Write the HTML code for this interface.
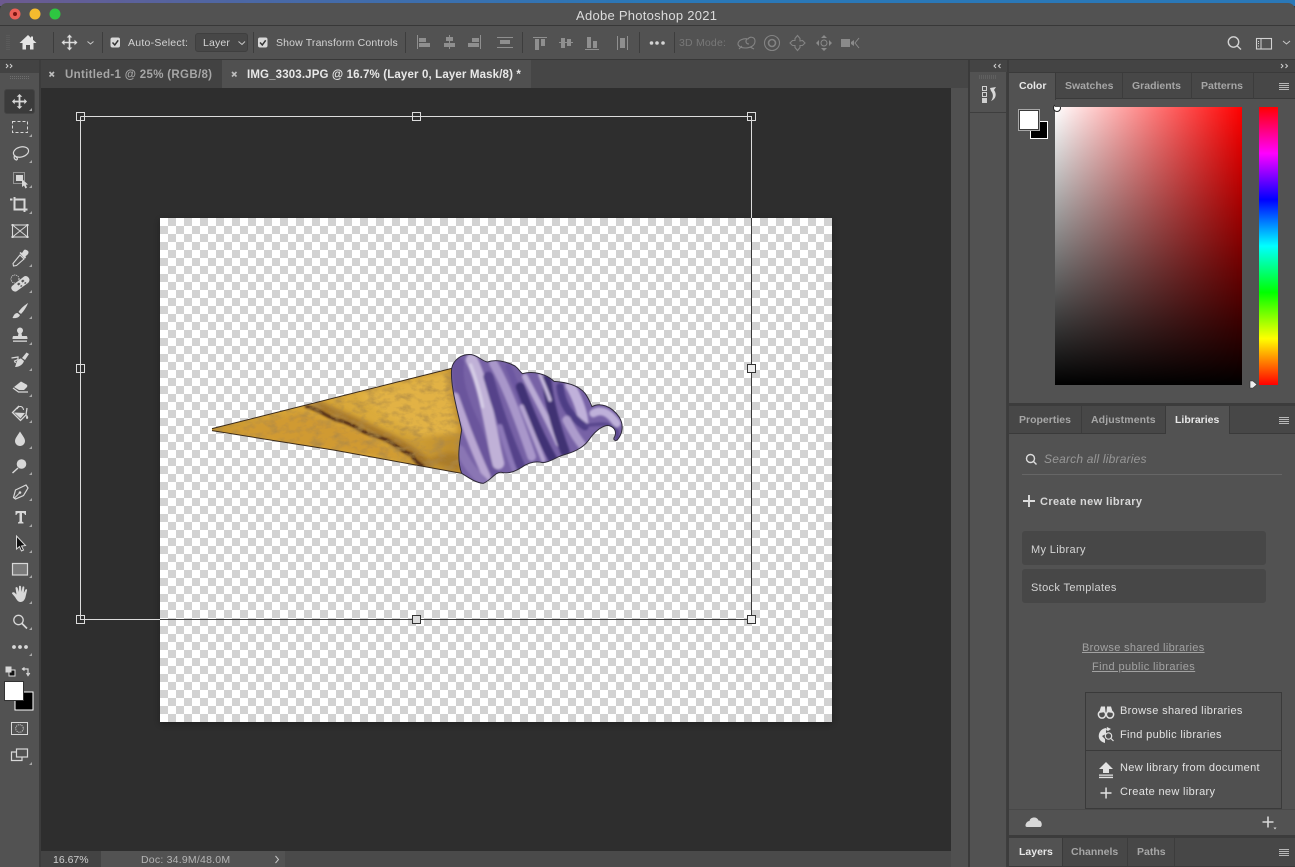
<!DOCTYPE html>
<html><head><meta charset="utf-8"><title>Adobe Photoshop 2021</title>
<style>
*{box-sizing:border-box}
html,body{margin:0;padding:0;width:1295px;height:867px;overflow:hidden;background:#3a3a3a}
body{position:relative;font-family:"Liberation Sans",sans-serif;filter:blur(.3px)}
.b{position:absolute}
.t{position:absolute;white-space:nowrap;line-height:16px;height:16px;font-size:11px;color:#d4d4d4;margin-top:1px}
.bd{font-weight:bold}
.tab{color:#a6a6a6;font-weight:bold;font-size:11.500px}
.on{color:#e8e8e8}
.m{color:#e2e2e2;font-size:11px;letter-spacing:.34px}
#ck{left:160px;top:218px;width:672px;height:504px;background-color:#fff;background-image:conic-gradient(#d2d2d2 0 25%,#fff 0 50%,#d2d2d2 0 75%,#fff 0);background-size:16px 16px;box-shadow:0 2px 6px rgba(0,0,0,.3)}
svg.o{position:absolute;left:0;top:0}
</style></head><body>
<div class="b" style="left:0;top:0;width:1295px;height:6px;background:linear-gradient(90deg,#6d5a90,#4a68a6 20%,#2a78b8 50%,#2a78b8 100%)"></div>
<div class="b" style="left:0;top:3px;width:1295px;height:864px;background:#525252;border-radius:7px 7px 0 0"></div>
<div class="b" style="left:0;top:25px;width:1295px;height:1px;background:#383838"></div>
<div class="b" style="left:0;top:59px;width:1295px;height:1px;background:#383838"></div>
<div class="b" style="left:0;top:60px;width:39px;height:13px;background:#434343"></div>
<div class="b" style="left:39px;top:60px;width:2px;height:807px;background:#3c3c3c"></div>
<div class="b" style="left:41px;top:60px;width:927px;height:28px;background:#464646"></div>
<div class="b" style="left:41px;top:60px;width:181px;height:28px;background:#424242"></div>
<div class="b" style="left:222px;top:60px;width:309px;height:28px;background:#505050"></div>
<div class="b" style="left:41px;top:88px;width:910px;height:763px;background:#2e2e2e"></div>
<div class="b" style="left:951px;top:88px;width:17px;height:779px;background:#505050"></div>
<div class="b" style="left:41px;top:851px;width:910px;height:16px;background:#4a4a4a"></div>
<div class="b" style="left:41px;top:851px;width:60px;height:16px;background:#434343"></div>
<div class="b" style="left:101px;top:851px;width:184px;height:16px;background:#525252"></div>
<div class="b" style="left:968px;top:60px;width:2px;height:807px;background:#3a3a3a"></div>
<div class="b" style="left:970px;top:60px;width:325px;height:12px;background:#444"></div>
<div class="b" style="left:970px;top:72px;width:37px;height:795px;background:#525252;border-right:1px solid #3e3e3e"></div>
<div class="b" style="left:970px;top:112px;width:37px;height:1px;background:#3e3e3e"></div>
<div class="b" style="left:1007px;top:60px;width:2px;height:807px;background:#3c3c3c"></div>
<!-- panel tab bars -->
<div class="b" style="left:1009px;top:72px;width:286px;height:1px;background:#3a3a3a"></div>
<div class="b" style="left:1009px;top:73px;width:286px;height:26px;background:#474747;border-bottom:1px solid #3a3a3a"></div>
<div class="b" style="left:1009px;top:73px;width:47px;height:27px;background:#525252;border-right:1px solid #3a3a3a"></div>
<div class="b" style="left:1122px;top:73px;width:1px;height:26px;background:#3c3c3c"></div>
<div class="b" style="left:1191px;top:73px;width:1px;height:26px;background:#3c3c3c"></div>
<div class="b" style="left:1253px;top:73px;width:1px;height:26px;background:#3c3c3c"></div>
<div class="b" style="left:1009px;top:403px;width:286px;height:3px;background:#3c3c3c"></div>
<div class="b" style="left:1009px;top:406px;width:286px;height:28px;background:#474747;border-bottom:1px solid #3a3a3a"></div>
<div class="b" style="left:1081px;top:406px;width:1px;height:27px;background:#3c3c3c"></div>
<div class="b" style="left:1165px;top:406px;width:65px;height:28px;background:#525252;border-left:1px solid #3a3a3a;border-right:1px solid #3a3a3a"></div>
<div class="b" style="left:1009px;top:809px;width:286px;height:1px;background:#484848"></div>
<div class="b" style="left:1009px;top:835px;width:286px;height:3px;background:#3c3c3c"></div>
<div class="b" style="left:1009px;top:838px;width:286px;height:29px;background:#474747"></div>
<div class="b" style="left:1009px;top:838px;width:54px;height:29px;background:#525252;border-right:1px solid #3a3a3a"></div>
<div class="b" style="left:1127px;top:838px;width:1px;height:29px;background:#3c3c3c"></div>
<div class="b" style="left:1174px;top:838px;width:1px;height:29px;background:#3c3c3c"></div>
<div class="b" style="left:1009px;top:866px;width:286px;height:1px;background:#3a3a3a"></div>
<!-- colour -->
<div class="b" style="left:1055px;top:107px;width:187px;height:278px;background:linear-gradient(to top,#000,rgba(0,0,0,0)),linear-gradient(to right,#fff,#f00)"></div>
<div class="b" style="left:1259px;top:107px;width:19px;height:278px;background:linear-gradient(to bottom,#f00 0%,#f0f 16.7%,#00f 33.3%,#0ff 50%,#0f0 66.7%,#ff0 83.3%,#f00 100%)"></div>
<div class="b" style="left:1030px;top:121px;width:18px;height:18px;background:#000;border:1px solid #fff"></div>
<div class="b" style="left:1018px;top:109px;width:22px;height:22px;background:#fff;border:2px solid #3a3a3a;outline:1px solid #a8a8a8;outline-offset:-1px"></div>
<!-- libraries boxes -->
<div class="b" style="left:1022px;top:474px;width:260px;height:1px;background:#666"></div>
<div class="b" style="left:1022px;top:531px;width:244px;height:34px;background:#474747;border-radius:3px"></div>
<div class="b" style="left:1022px;top:569px;width:244px;height:34px;background:#474747;border-radius:3px"></div>
<div class="b" style="left:1085px;top:692px;width:197px;height:117px;background:#505050;border:1px solid #3a3a3a"></div>
<div class="b" style="left:1086px;top:750px;width:195px;height:1px;background:#3a3a3a"></div>
<!-- options dropdown -->
<div class="b" style="left:195px;top:33px;width:53px;height:19px;background:#474747;border:1px solid #3f3f3f;border-radius:3px"></div>
<div class="b" style="left:4px;top:89px;width:31px;height:25px;background:#3b3b3b;border-radius:3px;border:1px solid #444"></div>
<div class="b" id="ck"></div>

<!-- text -->
<div class="t" style="left:576px;top:7px;font-size:13px;letter-spacing:.27px;color:#dcdcdc">Adobe Photoshop 2021</div>
<div class="t" style="left:128px;top:34px;font-size:10.5px;letter-spacing:.25px">Auto-Select:</div>
<div class="t" style="left:203px;top:34px;font-size:10.5px;letter-spacing:.15px">Layer</div>
<div class="t" style="left:276px;top:34px;font-size:10.5px;letter-spacing:.15px">Show Transform Controls</div>
<div class="t" style="left:679px;top:34px;font-size:10.5px;color:#787878;letter-spacing:.2px">3D Mode:</div>
<div class="t tab" style="left:65px;top:66px;letter-spacing:.32px">Untitled-1 @ 25% (RGB/8)</div>
<div class="t tab on" style="left:247px;top:66px;letter-spacing:.14px">IMG_3303.JPG @ 16.7% (Layer 0, Layer Mask/8) *</div>
<div class="t tab on" style="left:1019px;top:77px;font-size:10.5px">Color</div>
<div class="t tab" style="left:1065px;top:77px;font-size:10.5px">Swatches</div>
<div class="t tab" style="left:1132px;top:77px;font-size:10.5px">Gradients</div>
<div class="t tab" style="left:1201px;top:77px;font-size:10.5px">Patterns</div>
<div class="t tab" style="left:1019px;top:411px;font-size:10.5px">Properties</div>
<div class="t tab" style="left:1091px;top:411px;font-size:10.5px;letter-spacing:.1px">Adjustments</div>
<div class="t tab on" style="left:1175px;top:411px;font-size:10.5px">Libraries</div>
<div class="t" style="left:1044px;top:450px;font-size:12px;font-style:italic;color:#979797;letter-spacing:.2px">Search all libraries</div>
<div class="t bd" style="left:1040px;top:493px;font-size:11px;color:#d8d8d8;letter-spacing:.39px">Create new library</div>
<div class="t" style="left:1031px;top:541px;letter-spacing:.35px">My Library</div>
<div class="t" style="left:1031px;top:579px;letter-spacing:.35px">Stock Templates</div>
<div class="t" style="left:1082px;top:639px;color:#a2a2a2;text-decoration:underline;letter-spacing:.33px">Browse shared libraries</div>
<div class="t" style="left:1092px;top:658px;color:#a2a2a2;text-decoration:underline;letter-spacing:.4px">Find public libraries</div>
<div class="t m" style="left:1120px;top:702px">Browse shared libraries</div>
<div class="t m" style="left:1120px;top:726px">Find public libraries</div>
<div class="t m" style="left:1120px;top:759px">New library from document</div>
<div class="t m" style="left:1120px;top:783px">Create new library</div>
<div class="t tab on" style="left:1019px;top:843px;font-size:10.5px">Layers</div>
<div class="t tab" style="left:1071px;top:843px;font-size:10.5px">Channels</div>
<div class="t tab" style="left:1137px;top:843px;font-size:10.5px">Paths</div>
<div class="t" style="left:53px;top:851px;font-size:10.5px;color:#d0d0d0">16.67%</div>
<div class="t" style="left:141px;top:851px;font-size:10.5px;color:#b4b4b4;letter-spacing:.22px">Doc: 34.9M/48.0M</div>

<svg class="o" width="1295" height="867" viewBox="0 0 1295 867" xmlns="http://www.w3.org/2000/svg">
<defs>
<linearGradient id="cone" x1="0" y1="0" x2="1" y2="0.1"><stop offset="0" stop-color="#b88c2c"/><stop offset=".3" stop-color="#d6a436"/><stop offset=".75" stop-color="#dcac3c"/><stop offset="1" stop-color="#c08f2e"/></linearGradient>
<clipPath id="sw"><path id="swp" d="M755 85C760 60 785 40 815 44C835 48 845 62 862 66C885 58 915 62 945 78C958 88 962 98 968 101C1000 92 1040 102 1062 124C1095 126 1135 135 1155 160C1168 178 1172 192 1176 200C1200 186 1235 198 1258 232C1272 255 1268 280 1252 300C1244 304 1238 298 1244 290C1252 272 1240 258 1222 256C1200 260 1180 280 1165 302C1145 328 1115 338 1090 345C1070 350 1050 368 1028 368C1005 362 985 368 965 382C945 395 925 402 905 397C885 395 875 420 850 430C825 428 805 412 785 400C770 360 778 310 785 270C775 220 750 140 755 85Z"/></clipPath>
<clipPath id="cc"><path d="M36 266L755 85C750 140 775 220 785 270C778 310 775 360 785 400L400 330L36 272Z"/></clipPath>
<filter id="sft" x="-10%" y="-10%" width="120%" height="120%"><feGaussianBlur stdDeviation="2.800"/></filter>
<filter id="sft2" x="-20%" y="-20%" width="140%" height="140%"><feGaussianBlur stdDeviation="9"/></filter>
<filter id="tex" x="0" y="0" width="100%" height="100%"><feTurbulence type="fractalNoise" baseFrequency=".03 .05" numOctaves="4" seed="4" result="n"/><feColorMatrix in="n" type="matrix" values="0 0 0 0 .42  0 0 0 0 .25  0 0 0 0 .06  0 0 0 1.8 -.75" result="d"/><feMerge><feMergeNode in="SourceGraphic"/><feMergeNode in="d"/></feMerge></filter>
</defs>

<!-- ice cream -->
<g transform="translate(200 340) scale(.33333)">
<g clip-path="url(#cc)">
<g filter="url(#tex)">
<rect x="0" y="60" width="800" height="360" fill="url(#cone)"/>
<path d="M60 272L300 215L480 275L640 365L300 320Z" fill="#d09a32" filter="url(#sft2)"/>
<path d="M470 165L740 95L775 280L650 290Z" fill="#e2b244" filter="url(#sft2)"/>
<path d="M680 360L780 395L785 340L740 340Z" fill="#a97a2a" filter="url(#sft2)"/>
<path d="M340 190C420 225 500 260 570 295C620 320 650 345 690 385" fill="none" stroke="#7e4f1c" stroke-width="26" opacity=".6" filter="url(#sft2)"/>
<path d="M315 198C350 205 375 225 405 238C440 245 465 258 485 272C510 285 535 288 560 300C585 312 605 335 638 345C640 360 655 370 672 380" fill="none" stroke="#4f2c14" stroke-width="10" stroke-linejoin="round" filter="url(#sft)"/>
</g>
</g>
<path d="M36 266L755 85M36 272L400 330L785 400" fill="none" stroke="#3a2a1a" stroke-width="3" stroke-linejoin="round"/>
<g clip-path="url(#sw)">
<rect x="740" y="30" width="540" height="410" fill="#7762a6"/>
<g fill="none" stroke-linecap="round" filter="url(#sft)">
<path d="M775 70C768 120 790 190 825 260C845 310 860 360 880 400" stroke="#6a559c" stroke-width="34"/>
<path d="M815 60C845 120 860 200 880 300C885 330 890 350 895 370" stroke="#c0b1d7" stroke-width="36"/>
<path d="M812 75C825 110 838 150 848 200" stroke="#d6cde6" stroke-width="10"/>
<path d="M765 170C790 240 815 310 860 410" stroke="#b8a6d2" stroke-width="24"/>
<path d="M780 330C800 370 820 400 850 425" stroke="#8a76b4" stroke-width="28"/>
<path d="M865 110C890 200 925 300 965 390" stroke="#54428a" stroke-width="30"/>
<path d="M880 70C915 130 950 220 995 350" stroke="#a997ca" stroke-width="26"/>
<path d="M925 80C945 130 965 170 985 240" stroke="#6c57a0" stroke-width="18"/>
<path d="M900 260C915 310 930 360 945 395" stroke="#8c78b8" stroke-width="16"/>
<path d="M960 140C990 220 1020 290 1060 360" stroke="#403075" stroke-width="26"/>
<path d="M975 110C1005 170 1040 230 1075 310" stroke="#b9aad4" stroke-width="18"/>
<path d="M965 200C990 260 1010 310 1030 360" stroke="#b2a2cf" stroke-width="14"/>
<path d="M1040 120C1045 170 1060 240 1095 335" stroke="#3f3073" stroke-width="28"/>
<path d="M1020 105C1030 130 1040 150 1050 180" stroke="#c6b9dd" stroke-width="10"/>
<path d="M1110 135C1130 170 1150 220 1150 250" stroke="#c0b1da" stroke-width="30"/>
<path d="M1080 140C1085 190 1110 230 1155 260" stroke="#4e3d85" stroke-width="22"/>
<path d="M1100 240C1120 280 1135 300 1150 320" stroke="#ad9ccc" stroke-width="26"/>
<path d="M1180 220C1205 205 1230 220 1250 250" stroke="#bfb1da" stroke-width="24"/>
<path d="M1160 255C1190 255 1215 245 1240 262C1250 268 1255 280 1250 295" stroke="#57458c" stroke-width="10"/>
</g>
</g>
<use href="#swp" fill="none" stroke="#2f2a3a" stroke-width="3"/>
</g>

<!-- transform box -->
<g fill="none" shape-rendering="crispEdges">
<path d="M80.5 116.5H751.5V218M80.5 116.500V619.500H160" stroke="#dcdcdc"/>
<path d="M751.500 218V619.500H160" stroke="#3a3a3a"/>
<rect x="76.500" y="112.500" width="8" height="8" stroke="#dcdcdc"/>
<rect x="412.500" y="112.500" width="8" height="8" stroke="#dcdcdc"/>
<rect x="747.500" y="112.500" width="8" height="8" stroke="#dcdcdc"/>
<rect x="76.500" y="364.500" width="8" height="8" stroke="#dcdcdc"/>
<rect x="76.500" y="615.500" width="8" height="8" stroke="#dcdcdc"/>
<rect x="412.500" y="615.500" width="8" height="8" stroke="#333" fill="#ddd"/>
<rect x="747.500" y="364.500" width="8" height="8" stroke="#333" fill="#eee"/>
<rect x="747.500" y="615.500" width="8" height="8" stroke="#333" fill="#eee"/>
</g>

<!-- traffic lights -->
<circle cx="15" cy="14" r="5.500" fill="#ec5f57"/><circle cx="15" cy="14" r="2" fill="#7b1512"/>
<circle cx="35" cy="14" r="5.500" fill="#f5bb2e"/><circle cx="55" cy="14" r="5.500" fill="#2ec541"/>

<!-- options separators -->
<path d="M53.500 32V53M102.500 32V53M253.500 32V53M405.500 32V53M522.500 32V53M639.500 32V53M674.500 32V53" stroke="#3d3d3d"/>
<path d="M7 35V50M9 35V50" stroke="#626262" stroke-dasharray="1 1"/>
<!-- home -->
<path d="M28 35L19.500 43H22.500V49.500H26V45H30V49.500H33.500V43H36.500L33 39.800V36.500H31V37.900Z" fill="#e6e6e6"/>
<!-- move option -->
<path transform="translate(69.500 42.500)" d="M0-8L-2.800-5H-.8V-.8H-5V-2.800L-8 0L-5 2.800V.8H-.8V5H-2.800L0 8L2.800 5H.8V.8H5V2.800L8 0L5-2.800V-.8H.8V-5H2.800Z" fill="#dcdcdc"/>
<g fill="none" stroke="#c8c8c8" stroke-width="1"><path d="M87.500 41.500L90.500 44L93.500 41.500M238.500 41.500L242 44.500L245 41.500M1283 41L1286.500 44L1290 41"/></g>
<!-- checkboxes -->
<rect x="110.500" y="37.500" width="9.500" height="10" rx="2" fill="#d8d8d8"/><path d="M112.500 42.500L114.800 45L118.200 40.300" stroke="#333" stroke-width="1.500" fill="none"/>
<rect x="258" y="37.500" width="9.500" height="10" rx="2" fill="#d8d8d8"/><path d="M260 42.500L262.300 45L265.700 40.300" stroke="#333" stroke-width="1.500" fill="none"/>
<!-- align icons -->
<g fill="#8f8f8f">
<path d="M417 35h1v14h-1zM419 38h7v4h-7zM419 43h11v4h-11z"/>
<path d="M449 35h1v14h-1zM446 37h7v4h-7zM444 43h11v4h-11z"/>
<path d="M480 35h1v14h-1zM472 38h7v4h-7zM468 43h11v4h-11z"/>
<path d="M497 37h16v1h-16zM497 47h16v1h-16zM500 40h10v4h-10z"/>
<path d="M533 37h14v1h-14zM535 39h4v11h-4zM541 39h4v7h-4z"/>
<path d="M559 42h14v1h-14zM561 38h4v10h-4zM567 39h4v7h-4z"/>
<path d="M585 49h14v1h-14zM587 37h4v11h-4zM593 41h4v7h-4z"/>
<path d="M617 36h1v14h-1zM627 36h1v14h-1zM620 38h5v10h-5z"/>
</g>
<g fill="#d4d4d4"><circle cx="651.500" cy="43" r="1.800"/><circle cx="657" cy="43" r="1.800"/><circle cx="663" cy="43" r="1.800"/></g>
<!-- 3D icons -->
<g fill="none" stroke="#838383" stroke-width="1.100">
<path d="M738 44C738 40 744 38 748 39C750 36 755 37 755 41C755 46 750 48 745 48C741 48 738 46 738 44ZM742 46L739 49M750 47L754 49M747 39C745 41 746 44 749 44"/>
<circle cx="772" cy="43" r="7.500"/><circle cx="772" cy="43" r="3.500" stroke-width="1.600"/>
<path d="M797.500 35.500L800 38.500V41L802.500 40.500L805 43L802.500 45.500H800V47.500L797.500 50.500L795 47.500V45.500H792.500L790 43L792.500 40.500H795V38.500Z"/>
</g>
<g fill="#8a8a8a">
<path d="M824 35l3 3h-6zM824 51l3-3h-6zM816 43l3-3v6zM832 43l-3-3v6z"/><circle cx="824" cy="43" r="3" fill="none" stroke="#8a8a8a"/>
<path d="M841 39h9v8h-9zM851 42l3-2v6l-3-2z"/><path d="M859 38l-4 5 4 5" fill="none" stroke="#8a8a8a"/>
</g>
<!-- right header icons -->
<g fill="none" stroke="#d2d2d2" stroke-width="1.400"><circle cx="1233.500" cy="42" r="5.200"/><path d="M1237.300 46L1241 49.500"/></g>
<rect x="1256.500" y="38.500" width="15" height="10.500" fill="none" stroke="#d2d2d2" stroke-width="1.100"/><path d="M1258.500 41v1M1258.500 43v1M1258.500 45.500v1M1261 38.500v10.500" stroke="#d2d2d2"/>
<!-- collapse glyphs -->
<g fill="none" stroke="#d0d0d0" stroke-width="1">
<path d="M6 64L8 66L6 68M10 64L12 66L10 68"/>
<path d="M996 64L994 66L996 68M1000.500 64L998.500 66L1000.500 68"/>
<path d="M1281 64L1283 66L1281 68M1285.500 64L1287.500 66L1285.500 68"/>
</g>
<!-- tab close -->
<g stroke="#bdbdbd" stroke-width="1.600"><path d="M49.500 72L54 76.500M54 72L49.500 76.500"/><path d="M232 72L236.500 76.500M236.500 72L232 76.500"/></g>
<!-- grips -->
<path d="M10 76.500H30M10 78.500H30" stroke="#6e6e6e" stroke-dasharray="1 1"/>
<path d="M979 76H997M979 78H997" stroke="#6e6e6e" stroke-dasharray="1 1"/>
<!-- history dock icon -->
<g fill="none" stroke="#d0d0d0"><rect x="982.500" y="86.500" width="4" height="4"/><rect x="982.500" y="92.500" width="4" height="4"/></g><rect x="982" y="98" width="5" height="5" fill="#d0d0d0"/>
<path d="M990 88L996 87L994 90C997 94 996 99 991 101C994 97 993 93 991 91Z" fill="#d8d8d8"/>
<!-- panel menus -->
<g stroke="#b8b8b8" stroke-width="1"><path d="M1279 83.500H1289M1279 85.500H1289M1279 87.500H1289M1279 89.500H1289"/><path d="M1279 417.500H1289M1279 419.500H1289M1279 421.500H1289M1279 423.500H1289"/><path d="M1279 849.500H1289M1279 851.500H1289M1279 853.500H1289M1279 855.500H1289"/></g>
<!-- colour pickers -->
<circle cx="1057" cy="108" r="3.500" fill="#fff" stroke="#222" stroke-width="1"/>
<rect x="1055" y="100" width="10" height="7" fill="#525252"/>
<path d="M1250 381h3l4 3.500-4 3.500h-3z" fill="#eee" stroke="#333" stroke-width=".6"/>
<!-- libraries icons -->
<g fill="none" stroke="#dcdcdc" stroke-width="1.400"><circle cx="1030.500" cy="458.500" r="4"/><path d="M1033.500 461.500L1036.500 464.500"/></g>
<path d="M1029 495V507M1023 501H1035" stroke="#dcdcdc" stroke-width="1.900"/>
<!-- popup icons -->
<g fill="#e2e2e2">
<circle cx="1102" cy="714.500" r="3.600" fill="none" stroke="#e2e2e2" stroke-width="1.500"/><circle cx="1110" cy="714.500" r="3.600" fill="none" stroke="#e2e2e2" stroke-width="1.500"/>
<path d="M1099 713L1101 706.500H1105L1105.500 712zM1106.500 712L1107 706.500H1111L1113 713z"/>
<path d="M1106 728C1100 729 1098 734 1099 738C1100 741 1102 742 1105 743L1105 739L1102 736L1106 734ZM1107 727L1111 729L1108 731L1106 730Z"/>
<path d="M1106 762L1113 769H1109V773H1103V769H1099Z"/><path d="M1099 774.500h14v1.300h-14zM1099 776.800h14v1.300h-14z"/>
<path d="M1105.300 787.500h1.500v11h-1.500zM1100.500 792.200h11v1.500h-11z"/>
</g>
<g fill="none" stroke="#e2e2e2" stroke-width="1.200"><circle cx="1108.500" cy="736" r="3.200"/><path d="M1111 738.500L1113.500 741"/></g>
<!-- footer -->
<path d="M1027 827C1024 827 1026 821 1029.500 821C1030 817 1037 816 1038.500 820.500C1042 820 1043 827 1040 827Z" fill="#d8d8d8"/>
<path d="M1268 816.500V827.500M1262.500 822H1273.500" stroke="#d8d8d8" stroke-width="1.600"/><path d="M1273.500 827.500h3l-1.500 2z" fill="#d8d8d8"/>
<path d="M275.500 856L278.500 859.500L275.500 863" fill="none" stroke="#c8c8c8"/>

<!-- tools -->
<g fill="#d8d8d8" stroke="none">
<path transform="translate(19.500 101.500)" d="M0-7.500L-2.800-4.800H-.9V-.9H-4.800V-2.800L-7.500 0L-4.800 2.800V.9H-.9V4.800H-2.800L0 7.500L2.800 4.800H.9V.9H4.800V2.800L7.500 0L4.800-2.800V-.9H.9V-4.800H2.800Z"/>
<rect x="12.500" y="121.500" width="15" height="11" fill="none" stroke="#d8d8d8" stroke-dasharray="3 2"/>
<g fill="none" stroke="#d8d8d8" stroke-width="1.200"><ellipse cx="21" cy="152" rx="7.700" ry="5" transform="rotate(-15 21 152)"/><path d="M15 155C13 158 15 160 17 160M15 156C17 158 18 158 17 160"/></g>
<rect x="13.500" y="172.500" width="11" height="11" fill="none" stroke="#d8d8d8" stroke-dasharray="1 1"/><rect x="16" y="175" width="7" height="6"/>
<path d="M22 179L22 187L24 185.500L25.500 188.500L27 187.500L25.800 184.800L28 184.500Z"/>
<path d="M10 199.500H12.500M14.500 197V209.500H27.500M14.500 199.500H24.500V212" fill="none" stroke="#d8d8d8" stroke-width="2"/>
<rect x="12.500" y="225" width="15" height="12" fill="none" stroke="#d8d8d8" stroke-width="1.100"/><path d="M12.500 225L27.500 237M27.500 225L12.500 237" stroke="#d8d8d8"/>
<rect x="11.500" y="224" width="2" height="2"/><rect x="26.500" y="224" width="2" height="2"/><rect x="11.500" y="236" width="2" height="2"/><rect x="26.500" y="236" width="2" height="2"/>
<path d="M24 250C25 249 27 250 28 251C29 252 28.500 254 27 255L25.500 256.500L26 258L24.500 258.500L19.500 253L20.500 252L22 253Z"/>
<path d="M20 255L24 259L16.500 265.500L13.500 266L13 263.500Z" fill="none" stroke="#d8d8d8" stroke-width="1.100"/>
<path d="M12 286L24 276.500C26 275 29 277 29.500 279.500C29.500 281 29 282 28 283L17 291C15 292.500 12.500 291 11.500 289C11 288 11.300 287 12 286Z"/>
<path d="M17 284l2-1.500 1.500 1.500-2 1.500zM21 281l2-1.500 1.500 1.500-2 1.500zM20 286l1.500-1 1 1-1.500 1zM24 283l1.500-1 1 1-1.500 1z" fill="#535353"/>
<circle cx="15" cy="279" r="4" fill="none" stroke="#d8d8d8" stroke-dasharray="1 1"/>
<path d="M28 303C25 305 21 308 18.500 312L21 314C24 311 27 306 28 303ZM17.500 313C14.500 313 13.500 316 12.500 318C15 318.500 19 318 20 315Z"/>
<circle cx="20" cy="330.500" r="3"/><path d="M18.500 333H21.500L22 336H26.500C27.300 336 27.500 338 27.500 339H12.500C12.500 338 12.700 336 13.500 336H18Z"/><rect x="13" y="340.500" width="14" height="1.300"/>
<path d="M29 354L25 360L22 358L26.500 352.500ZM21 358.500L24 361C23 364 20 367 15 367C16 365 16 363 17 361C18 359.500 20 358.500 21 358.500Z"/>
<path d="M11.500 358L18 357V359.500L14.500 361L15.500 363" fill="none" stroke="#d8d8d8" stroke-width="1.200"/>
<path d="M21 381.500L26.500 384.500C27.500 385 27.500 386 27 387L24 390H19L14 387Z"/><path d="M13 388L18.500 392H28" fill="none" stroke="#d8d8d8" stroke-width="1.200"/>
<path d="M19 406L12.500 412.500L20.500 420.500L26 415L27 408" fill="none" stroke="#d8d8d8" stroke-width="1.300"/><path d="M14 412.500L25 413L20.500 418.500Z" /><path d="M26.500 414.500C28 416 28.500 417.500 28 418.500C27 419.500 26 419 26 417.500Z"/><path d="M17 409C19 405 23 406 23.500 410" fill="none" stroke="#d8d8d8"/>
<path d="M20 431.500C18 435 15 438 15 441C15 444 17.500 446 20 446C22.500 446 25 444 25 441C25 438 22 435 20 431.500Z"/>
<circle cx="21.500" cy="464" r="4.800"/><path d="M18 468L12.500 473" stroke="#d8d8d8" stroke-width="1.500"/>
<path d="M26 485L28 488L23.500 495.500L15.500 499L13.500 497.500L15.500 490Z" fill="none" stroke="#d8d8d8" stroke-width="1.200"/><path d="M14 498.500L19.500 493" stroke="#d8d8d8"/><circle cx="20" cy="492.500" r="1.300"/>
<path d="M15.500 511H26V515H25C24.500 513.500 24 513 22 513V521.500L23.500 522.500V523.500H18V522.500L19.500 521.500V513C17.500 513 17 513.500 16.500 515H15.500Z"/>
<path d="M16.500 536L16.500 549L19.500 546.500L21.500 551L23.500 550L21.500 546L25.500 545.500Z" fill="#111" stroke="#d8d8d8" stroke-width="1"/>
<rect x="12.500" y="563.500" width="15" height="11.500" fill="#7a7a7a" stroke="#d8d8d8" stroke-width="1.200"/>
<path d="M15 597L12 593.500C12 592 14 592 15 593L16.500 594.500L15.500 588C15.500 587 17.300 586.800 17.700 588L18.800 592L19 586.500C19 585.500 20.800 585.500 21 586.500L21.500 592L22.500 587C22.800 586 24.500 586.300 24.300 587.500L23.800 593L25.500 589.500C26 588.700 27.400 589 27 590.500L25.500 597C24.800 600 23 602 20.500 602C18 602 16.500 599.500 15 597Z"/>
<circle cx="18.500" cy="620" r="4.700" fill="none" stroke="#d8d8d8" stroke-width="1.300"/><path d="M22 623.500L27 628.500" stroke="#d8d8d8" stroke-width="1.700"/>
<circle cx="14" cy="647" r="1.900"/><circle cx="20" cy="647" r="1.900"/><circle cx="26" cy="647" r="1.900"/>
<!-- small triangles -->
<g fill="#a8a8a8"><path d="M32 111v-3l-3 3zM32 137v-3l-3 3zM32 163v-3l-3 3zM32 188v-3l-3 3zM32 214v-3l-3 3zM32 267v-3l-3 3zM32 293v-3l-3 3zM32 319v-3l-3 3zM32 345v-3l-3 3zM32 371v-3l-3 3zM32 397v-3l-3 3zM32 423v-3l-3 3zM32 449v-3l-3 3zM32 475v-3l-3 3zM32 501v-3l-3 3zM32 527v-3l-3 3zM32 553v-3l-3 3zM32 578v-3l-3 3zM32 604v-3l-3 3zM32 630v-3l-3 3zM32 656v-3l-3 3zM32 765v-3l-3 3z"/></g>
<!-- default colors / swap -->
<rect x="9" y="670" width="6" height="6" fill="#111" stroke="#ddd"/><rect x="5.500" y="666.500" width="6" height="6"/>
<path d="M22 669H28V674M24.500 667.500L22.500 669L24.500 670.500M26.500 673L28 675.500L29.800 673" fill="none" stroke="#d8d8d8" stroke-width="1.200"/>
<rect x="15" y="692" width="18" height="18" fill="#000" stroke="#fff" stroke-width="1"/>
<rect x="4.500" y="681.500" width="19" height="19" fill="#fff" stroke="#333"/>
<rect x="11.500" y="722.500" width="16" height="12" fill="none" stroke="#d8d8d8"/><circle cx="19.500" cy="728.500" r="3.800" fill="none" stroke="#d8d8d8" stroke-dasharray="1 1"/>
<rect x="16.500" y="749" width="11" height="8" fill="none" stroke="#d8d8d8" stroke-width="1.200"/><path d="M16.500 752H11.500V760.500H22V757" fill="none" stroke="#d8d8d8" stroke-width="1.200"/>
</g>
</svg>
</body></html>
